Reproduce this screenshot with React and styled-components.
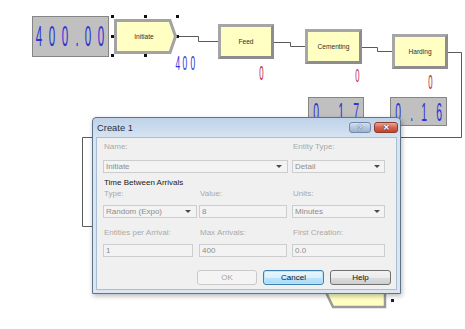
import React from 'react'
import styled, { createGlobalStyle } from 'styled-components'

const Global = createGlobalStyle`
	html, body {
		margin: 0;
		padding: 0;
		background: #fff;
	}
	body {
		font-family: "Liberation Sans", Arial, sans-serif;
	}
`

const Canvas = styled.div`
	position: relative;
	width: 465px;
	height: 329px;
	overflow: hidden;
	background: #fff;
`

const Wires = styled.svg`
	position: absolute;
	left: 0;
	top: 0;
`

// diagram nodes sit at their canvas coordinates
const Node = styled.div`
	position: absolute;
	left: ${p => p.x}px;
	top: ${p => p.y}px;
	width: ${p => p.w}px;
	height: ${p => p.h}px;
	box-sizing: border-box;
	display: flex;
	align-items: center;
	justify-content: center;
	font-size: 6.6px;
	color: #2e2e2e;
`

const Process = styled(Node)`
	background: #ffffc4;
	border: 3px solid #a6a6a6;
	border-right-color: #8d8d8d;
	border-bottom-color: #8d8d8d;
`

const Shape = styled.svg`
	position: absolute;
	left: 0;
	top: 0;
`

const NodeLabel = styled.span`
	position: relative;
	margin-right: ${p => p.shift || 0}px;
`

const Display = styled(Node)`
	background: #c0c0c0;
	border: 1px solid #858585;
`

const Counter = styled.div`
	position: absolute;
	left: ${p => p.x}px;
	top: ${p => p.y}px;
	display: flex;
`

const Cell = styled.span`
	width: ${p => p.pitch}px;
	display: flex;
	justify-content: center;
	font-family: "Liberation Sans", Arial, sans-serif;
	font-size: ${p => p.size}px;
	line-height: 1;
	color: ${p => p.color};
`

const Glyph = styled.span`
	display: inline-block;
	transform: scaleX(0.4);
`

const Digits = ({ text, pitch, size, color }) => (
	<>
		{text.split('').map((c, i) => (
			<Cell key={i} pitch={pitch} size={size} color={color}>
				<Glyph>{c}</Glyph>
			</Cell>
		))}
	</>
)

/* dialog */

const Window = styled.div`
	position: absolute;
	left: 92px;
	top: 117px;
	width: 309px;
	height: 177px;
	box-sizing: border-box;
	border: 1px solid #5f738b;
	border-radius: 4px 4px 0 0;
	background: linear-gradient(#bfd2e9, #d6e3f1 19px, #dbe6f2);
	padding: 0 3px 3px;
	display: flex;
	flex-direction: column;
	box-shadow: 1px 2px 5px rgba(0, 0, 0, 0.28);
`

const TitleBar = styled.div`
	height: 19px;
	margin: 0 -3px;
	padding: 0 2px 0 4px;
	display: flex;
	align-items: center;
	gap: 3px;
`

const Title = styled.div`
	flex: 1;
	font-size: 9.4px;
	color: #1e2f44;
`

const CaptionButton = styled.div`
	width: ${p => (p.close ? 24 : 22)}px;
	height: 11px;
	box-sizing: border-box;
	border-radius: 3px;
	border: 1px solid ${p => (p.close ? '#8d3a2f' : '#7489a3')};
	background: ${p =>
		p.close
			? 'linear-gradient(#eaa89b, #d4644f 50%, #c4432f)'
			: 'linear-gradient(#d4e1f0, #b3c7df 50%, #9cb4d2)'};
	color: #fff;
	font-size: 8px;
	font-weight: bold;
	line-height: 1;
	display: flex;
	align-items: center;
	justify-content: center;
	text-shadow: 0 0 1px #33455c, 0 0 2px rgba(0, 0, 0, 0.5);
`

const Body = styled.div`
	flex: 1;
	background: #f0f0f0;
	border: 1px solid #a9bdd4;
	padding: 4px 5px 0 6px;
	display: flex;
	flex-direction: column;
`

const Row = styled.div`
	display: grid;
	grid-template-columns: 96px 93px 93px;
	margin-top: ${p => p.mt || 0}px;
`

const Label = styled.div`
	grid-column: span ${p => p.span || 1};
	font-size: 8px;
	line-height: 10px;
	height: 10px;
	padding-left: 1px;
	white-space: nowrap;
	color: ${p => (p.strong ? '#1a1a1a' : '#a9a9a9')};
`

const Field = styled.div`
	grid-column: span ${p => p.span || 1};
	width: ${p => p.w}px;
	height: 13px;
	box-sizing: border-box;
	border: 1px solid #cdcdcd;
	background: #f3f3f3;
	padding: 0 ${p => p.ar || 4}px 0 2px;
	display: flex;
	align-items: center;
	font-size: 8px;
	color: #8d8d8d;
	white-space: nowrap;
`

const Arrow = styled.span`
	margin-left: auto;
	width: 0;
	height: 0;
	border-left: 3px solid transparent;
	border-right: 3px solid transparent;
	border-top: 3px solid #4a4a4a;
`

const Buttons = styled.div`
	display: flex;
	justify-content: flex-end;
	gap: 6px;
	margin-top: 13px;
`

const Button = styled.div`
	width: ${p => p.w}px;
	height: 15px;
	box-sizing: border-box;
	border-radius: 3px;
	display: flex;
	align-items: center;
	justify-content: center;
	font-size: 8px;
	color: ${p => (p.disabled ? '#a5a5a5' : '#111')};
	border: 1px solid
		${p => (p.disabled ? '#cacaca' : p.primary ? '#3c7fb1' : '#707070')};
	background: ${p =>
		p.disabled
			? '#f4f4f4'
			: p.primary
				? 'linear-gradient(#eaf6fd, #d9f0fc 50%, #bee6fd 50%, #a7d9f5)'
				: 'linear-gradient(#f2f2f2, #ebebeb 50%, #dddddd 50%, #cfcfcf)'};
	box-shadow: ${p => (p.primary ? 'inset 0 0 0 1px #b6e6fb' : 'none')};
`

const handles = [
	[112, 16], [145, 16], [177, 16],
	[112, 36], [177, 36],
	[112, 55], [145, 55],
]

export default function App() {
	return (
		<Canvas>
			<Global />
			<Wires width="465" height="329">
				<g fill="none" stroke="#5a5a5a" strokeWidth="1">
					<path d="M177 36.5 H198.5 V41.5 H218" />
					<path d="M274 42.5 H290.5 V46.5 H305" />
					<path d="M362 47.5 H377.5 V51.5 H392" />
					<path d="M448 52.5 H461.5 V137.5 H82.5 V226.5 H110" />
				</g>
				<polygon
					points="333,265 385,265 385,307 333,307 323,286"
					fill="#ffffc4"
					stroke="#9a9a9a"
					strokeWidth="2.5"
				/>
				<rect x="391" y="299" width="3" height="3" fill="#1b1b4a" />
				{handles.map(([x, y], i) => (
					<rect key={i} x={x - 1} y={y - 1} width="3" height="3" fill="#111" />
				))}
			</Wires>

			<Display x={32} y={16} w={77} h={41}>
				<Digits text="400.00" pitch={13} size={29} color="#3232d4" />
			</Display>

			<Node x={114} y={19} w={63} h={35}>
				<Shape width="63" height="35">
					<polygon
						points="1.5,1.5 56,1.5 61.5,17.5 56,33.5 1.5,33.5"
						fill="#ffffc4"
						stroke="#a3a3a3"
						strokeWidth="3"
					/>
				</Shape>
				<NodeLabel shift={3}>Initiate</NodeLabel>
			</Node>
			<Counter x={174} y={52}>
				<Digits text="400" pitch={7.5} size={21} color="#3232d4" />
			</Counter>

			<Process x={218} y={24} w={56} h={35}>Feed</Process>
			<Counter x={258} y={64}>
				<Digits text="0" pitch={6} size={19.5} color="#b3163a" />
			</Counter>

			<Process x={305} y={29} w={57} h={35}>Cementing</Process>
			<Counter x={354} y={66}>
				<Digits text="0" pitch={6} size={19} color="#b3163a" />
			</Counter>

			<Process x={392} y={34} w={56} h={35}>Harding</Process>
			<Counter x={427} y={73}>
				<Digits text="0" pitch={6} size={19.5} color="#b3163a" />
			</Counter>

			<Display x={308} y={97} w={56} h={29}>
				<Digits text="0.17" pitch={15} size={26} color="#3232d4" />
			</Display>
			<Display x={390} y={97} w={57} h={29}>
				<Digits text="0.16" pitch={14.5} size={26} color="#3232d4" />
			</Display>

			<Window>
				<TitleBar>
					<Title>Create 1</Title>
					<CaptionButton>?</CaptionButton>
					<CaptionButton close>✕</CaptionButton>
				</TitleBar>
				<Body>
					<Row>
						<Label span={2}>Name:</Label>
						<Label>Entity Type:</Label>
					</Row>
					<Row mt={8}>
						<Field span={2} w={185} ar={5}>
							Initiate
							<Arrow />
						</Field>
						<Field w={93}>
							Detail
							<Arrow />
						</Field>
					</Row>
					<Row mt={5}>
						<Label span={3} strong>
							Time Between Arrivals
						</Label>
					</Row>
					<Row mt={1}>
						<Label>Type:</Label>
						<Label>Value:</Label>
						<Label>Units:</Label>
					</Row>
					<Row mt={6}>
						<Field w={94} ar={5}>
							Random (Expo)
							<Arrow />
						</Field>
						<Field w={88}>8</Field>
						<Field w={93}>
							Minutes
							<Arrow />
						</Field>
					</Row>
					<Row mt={10}>
						<Label>Entities per Arrival:</Label>
						<Label>Max Arrivals:</Label>
						<Label>First Creation:</Label>
					</Row>
					<Row mt={6}>
						<Field w={90}>1</Field>
						<Field w={88}>400</Field>
						<Field w={93}>0.0</Field>
					</Row>
					<Buttons>
						<Button w={60} disabled>
							OK
						</Button>
						<Button w={61} primary>
							Cancel
						</Button>
						<Button w={61}>Help</Button>
					</Buttons>
				</Body>
			</Window>
		</Canvas>
	)
}
